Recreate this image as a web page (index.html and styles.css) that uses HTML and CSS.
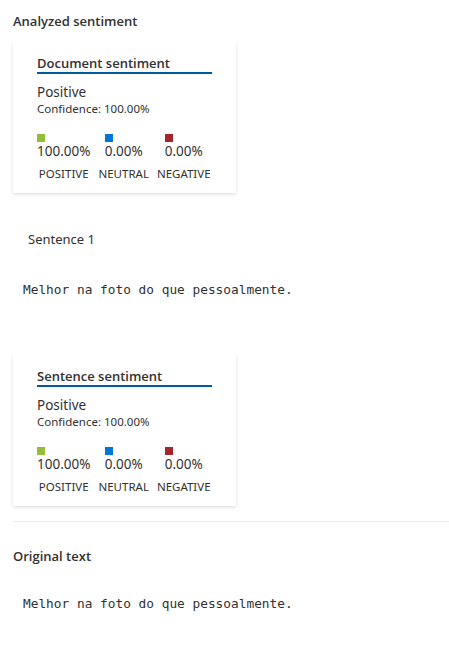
FILE: index.html
```html
<!DOCTYPE html>
<html>
<head>
<meta charset="utf-8">
<link rel="stylesheet" href="styles.css">
</head>
<body>
<div class="page">
  <h2 class="section-title first">Analyzed sentiment</h2>
  <div class="card">
    <div class="card-title">Document sentiment</div>
    <div class="label-main">Positive</div>
    <div class="confidence">Confidence: 100.00%</div>
    <div class="scores">
      <div class="col">
        <div class="val"><span class="sq pos"></span>100.00%</div>
        <div class="name">POSITIVE</div>
      </div>
      <div class="col">
        <div class="val"><span class="sq neu"></span>0.00%</div>
        <div class="name">NEUTRAL</div>
      </div>
      <div class="col">
        <div class="val"><span class="sq neg"></span>0.00%</div>
        <div class="name">NEGATIVE</div>
      </div>
    </div>
  </div>

  <div class="sentence-label">Sentence 1</div>
  <pre class="mono">Melhor na foto do que pessoalmente.</pre>

  <div class="card card-sentence">
    <div class="card-title">Sentence sentiment</div>
    <div class="label-main">Positive</div>
    <div class="confidence">Confidence: 100.00%</div>
    <div class="scores">
      <div class="col">
        <div class="val"><span class="sq pos"></span>100.00%</div>
        <div class="name">POSITIVE</div>
      </div>
      <div class="col">
        <div class="val"><span class="sq neu"></span>0.00%</div>
        <div class="name">NEUTRAL</div>
      </div>
      <div class="col">
        <div class="val"><span class="sq neg"></span>0.00%</div>
        <div class="name">NEGATIVE</div>
      </div>
    </div>
  </div>

  <hr class="divider">

  <h2 class="section-title">Original text</h2>
  <pre class="mono mono-original">Melhor na foto do que pessoalmente.</pre>
</div>
</body>
</html>
```

FILE: styles.css
```css
html, body {
  margin: 0;
  padding: 0;
  background: #ffffff;
}
body {
  font-family: "Segoe UI", "Noto Sans", "Open Sans", sans-serif;
  color: #323130;
}
.page {
  padding: 0 0 0 13px;
}
.section-title {
  margin: 0;
  font-family: "Segoe UI", "Open Sans", "Noto Sans", sans-serif;
  font-size: 13px;
  font-weight: 600;
  line-height: 18px;
  color: #323130;
}
.section-title.first {
  padding-top: 12px;
}
.card {
  width: 199px;
  margin-top: 11px;
  padding: 13px 0 11px 24px;
  background: #fff;
  box-shadow: 0 1.6px 3.6px rgba(0,0,0,0.13), 0 0.3px 0.9px rgba(0,0,0,0.11);
}
.card-title {
  width: 175px;
  font-family: "Segoe UI", "Open Sans", "Noto Sans", sans-serif;
  font-size: 13px;
  font-weight: 600;
  line-height: 18px;
  padding-bottom: 0;
  border-bottom: 2px solid #005a9e;
  color: #323130;
}
.label-main {
  margin-top: 9px;
  font-size: 13.5px;
  line-height: 18px;
}
.confidence {
  font-size: 11.5px;
  line-height: 16px;
}
.scores {
  display: flex;
  gap: 8px;
  margin-top: 17px;
}
.col {
  display: flex;
  flex-direction: column;
  align-items: center;
}
.val {
  display: flex;
  flex-direction: column;
  align-items: flex-start;
  font-size: 13.5px;
  line-height: 18px;
}
.sq {
  display: block;
  width: 8px;
  height: 8px;
  margin-bottom: 0;
}
.sq.pos { background: #95bd3a; }
.sq.neu { background: #0078d4; }
.sq.neg { background: #a4262c; }
.name {
  margin-top: 6px;
  font-size: 11.5px;
  line-height: 16px;
}
.sentence-label {
  margin-top: 37px;
  padding-left: 15px;
  font-size: 13px;
  line-height: 18px;
}
.mono {
  margin: 34px 0 0 0;
  padding-left: 10px;
  font-family: "DejaVu Sans Mono", "Liberation Mono", monospace;
  font-size: 12.8px;
  line-height: 16px;
  color: #323130;
}
.card-sentence {
  margin-top: 56px;
}
.divider {
  margin: 15px 0 0 0;
  border: 0;
  border-top: 1px solid #edebe9;
  height: 0;
}
.divider + .section-title {
  margin-top: 25px;
}
.mono-original {
  margin-top: 31px;
}
```
